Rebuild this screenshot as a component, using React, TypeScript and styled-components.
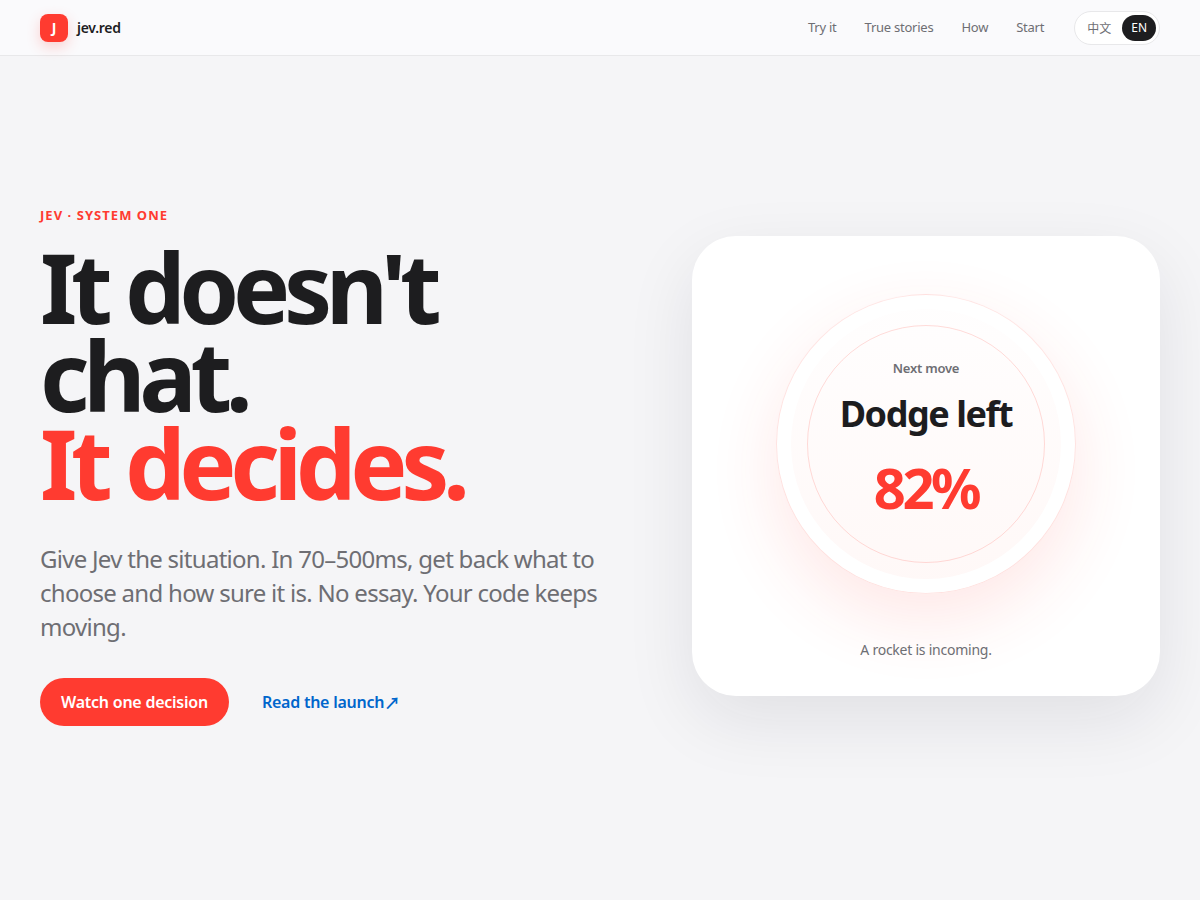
import React from "react";
import styled, { createGlobalStyle } from "styled-components";

const GlobalStyle = createGlobalStyle`
  *, *::before, *::after { box-sizing: border-box; }
  body {
    margin: 0;
    background: #f5f5f7;
    color: #1d1d1f;
    font-family: "Noto Sans", "Noto Sans CJK SC", sans-serif;
    font-size: 16px;
    letter-spacing: -0.015em;
  }
  a { color: inherit; text-decoration: none; }
  p, h1 { margin: 0; }
`;

const Page = styled.div`
  display: flex;
  flex-direction: column;
  min-height: 100vh;
`;

const Header = styled.header`
  display: flex;
  align-items: center;
  justify-content: space-between;
  height: 56px;
  padding: 0 40px;
  background: #fafafc;
  border-bottom: 1px solid #e8e8ea;
`;

const Brand = styled.a`
  display: flex;
  align-items: center;
  gap: 9px;
  font-size: 14px;
  font-weight: 600;
  letter-spacing: -0.02em;
`;

const BrandMark = styled.span`
  display: grid;
  place-items: center;
  width: 28px;
  height: 28px;
  border-radius: 8px;
  background: #ff3b30;
  color: #fff;
  font-size: 14px;
  font-weight: 700;
  box-shadow: 0 5px 14px rgba(255, 59, 48, 0.22);
`;

const Nav = styled.nav`
  display: flex;
  align-items: center;
  gap: 28px;
  color: #6e6e73;
  font-size: 13px;
  line-height: 20px;
`;

const NavLink = styled.a`
  padding-bottom: 1px;
`;

const LangSwitch = styled.div`
  display: flex;
  gap: 2px;
  margin-left: 2px;
  padding: 3px;
  border: 1px solid #e8e8ea;
  border-radius: 999px;
  background: #fff;
`;

const LangButton = styled.button<{ $active?: boolean }>`
  height: 26px;
  padding: 0 9px;
  border: 0;
  border-radius: 999px;
  background: ${({ $active }) => ($active ? "#1d1d1f" : "transparent")};
  color: ${({ $active }) => ($active ? "#fff" : "#6e6e73")};
  font-family: inherit;
  font-size: 12px;
  cursor: pointer;
`;

const Hero = styled.main`
  flex: 1;
  display: grid;
  grid-template-columns: minmax(0, 11fr) minmax(0, 9fr);
  align-items: center;
  gap: 80px;
  padding: 48px 40px 72px;
`;

const Eyebrow = styled.p`
  margin-bottom: 19px;
  color: #ff3b30;
  font-size: 13px;
  line-height: 18px;
  font-weight: 700;
  letter-spacing: 0.08em;
`;

const Title = styled.h1`
  font-size: 96px;
  line-height: 0.92;
  font-weight: 700;
  letter-spacing: -0.066em;
`;

const TitleAccent = styled.span`
  display: block;
  color: #ff3b30;
`;

const Lead = styled.p`
  margin-top: 35px;
  color: #6e6e73;
  font-size: 24px;
  line-height: 34px;
  letter-spacing: -0.03em;
`;

const Actions = styled.div`
  display: flex;
  flex-wrap: wrap;
  gap: 12px;
  margin-top: 34px;
`;

const Action = styled.a<{ $primary?: boolean }>`
  display: inline-flex;
  align-items: center;
  height: 48px;
  padding: 0 21px;
  border-radius: 999px;
  background: ${({ $primary }) => ($primary ? "#ff3b30" : "transparent")};
  color: ${({ $primary }) => ($primary ? "#fff" : "#0066cc")};
  font-size: 16px;
  font-weight: 600;
`;

const Arrow = styled.span`
  font-family: "Noto Sans CJK JP", sans-serif;
  font-weight: 700;
`;

const Card = styled.section`
  display: flex;
  flex-direction: column;
  align-items: center;
  min-height: 460px;
  padding: 58px 24px 36px;
  border-radius: 44px;
  background: #fff;
  box-shadow: 0 24px 70px rgba(20, 20, 40, 0.09);
`;

const Orb = styled.div`
  display: grid;
  place-items: center;
  width: 300px;
  height: 300px;
  border: 1px solid rgba(255, 59, 48, 0.12);
  border-radius: 50%;
  background: linear-gradient(#fffefe, #fff8f7);
  box-shadow:
    0 26px 70px rgba(255, 59, 48, 0.12),
    inset 0 0 0 14px #fff;
`;

const OrbCore = styled.div`
  display: flex;
  flex-direction: column;
  align-items: center;
  width: 238px;
  height: 238px;
  padding-top: 32px;
  border: 1px solid rgba(255, 59, 48, 0.18);
  border-radius: 50%;
  white-space: nowrap;
`;

const OrbLabel = styled.span`
  color: #6e6e73;
  font-size: 13px;
  line-height: 20px;
  font-weight: 600;
`;

const OrbChoice = styled.strong`
  margin-top: 9px;
  font-size: 36px;
  line-height: 54px;
  font-weight: 700;
  letter-spacing: -0.04em;
`;

const OrbScore = styled.span`
  margin-top: 8px;
  color: #ff3b30;
  font-size: 56px;
  line-height: 76px;
  font-weight: 700;
  letter-spacing: -0.06em;
`;

const Caption = styled.p`
  margin-top: 46px;
  color: #6e6e73;
  font-size: 14px;
  line-height: 20px;
`;

const links = [
  { href: "#try", label: "Try it" },
  { href: "#stories", label: "True stories" },
  { href: "#how", label: "How" },
  { href: "#start", label: "Start" },
];

export default function App() {
  return (
    <Page>
      <GlobalStyle />
      <Header>
        <Brand href="#">
          <BrandMark>J</BrandMark>
          jev.red
        </Brand>
        <Nav aria-label="Main">
          {links.map(({ href, label }) => (
            <NavLink key={href} href={href}>{label}</NavLink>
          ))}
          <LangSwitch role="group" aria-label="Language">
            <LangButton type="button" lang="zh">中文</LangButton>
            <LangButton type="button" $active aria-pressed="true">EN</LangButton>
          </LangSwitch>
        </Nav>
      </Header>
      <Hero>
        <div>
          <Eyebrow>JEV · SYSTEM ONE</Eyebrow>
          <Title>
            It doesn't chat.
            <TitleAccent>It decides.</TitleAccent>
          </Title>
          <Lead>
            Give Jev the situation. In 70–500ms, get back what to choose and how
            sure it is. No essay. Your code keeps moving.
          </Lead>
          <Actions>
            <Action href="#try" $primary>Watch one decision</Action>
            <Action href="#launch">Read the launch<Arrow aria-hidden="true">↗</Arrow></Action>
          </Actions>
        </div>
        <Card aria-label="Example decision">
          <Orb>
            <OrbCore>
              <OrbLabel>Next move</OrbLabel>
              <OrbChoice>Dodge left</OrbChoice>
              <OrbScore>82%</OrbScore>
            </OrbCore>
          </Orb>
          <Caption>A rocket is incoming.</Caption>
        </Card>
      </Hero>
    </Page>
  );
}
